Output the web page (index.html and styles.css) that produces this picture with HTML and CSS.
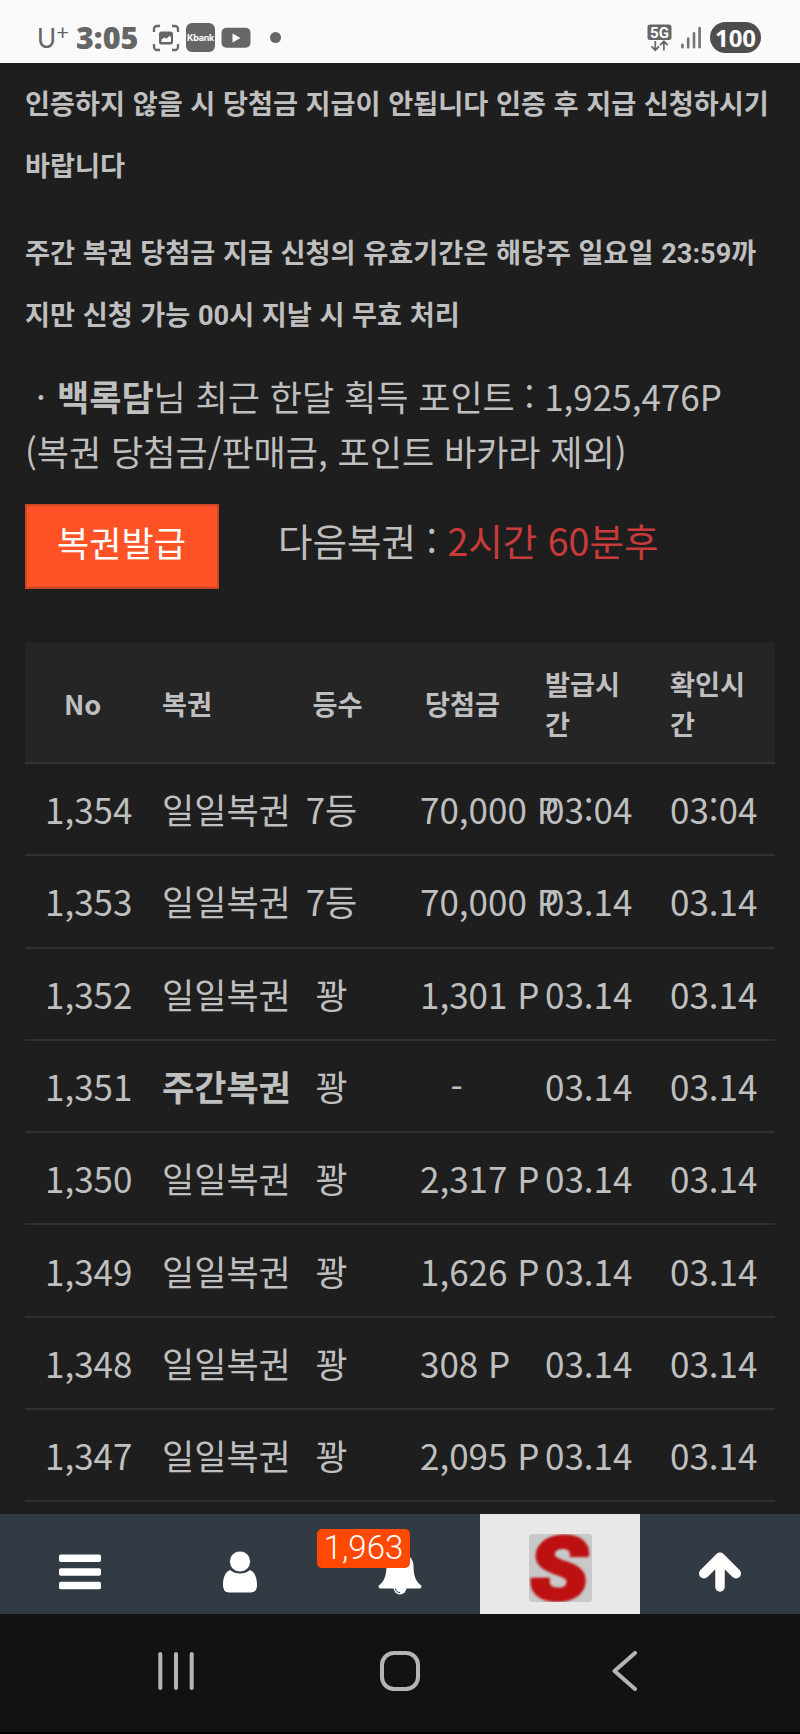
FILE: index.html
```html
<!DOCTYPE html>
<html lang="ko">
<head>
    <meta charset="UTF-8">
    <meta name="viewport" content="width=device-width, initial-scale=1.0">
    <title>복권</title>
    <link rel="stylesheet" href="styles.css">
</head>
<body>

    <!-- Status Bar -->
    <div class="status-bar">
        <div class="status-left">
            <span class="carrier">U<sup>+</sup></span>
            <span class="clock">3:05</span>
            <svg class="capture-icon" width="28" height="28" viewBox="0 0 28 28">
                <path d="M2 8V5a3 3 0 0 1 3-3h3M20 2h3a3 3 0 0 1 3 3v3M26 20v3a3 3 0 0 1-3 3h-3M8 26H5a3 3 0 0 1-3-3v-3" fill="none" stroke="#6a6a6a" stroke-width="2.3"/>
                <rect x="7" y="7.5" width="14" height="13" rx="2.5" fill="#666"/>
                <path d="M9.500 18v-2.500l3-2 2 1.200 3-3 1.500 1.500V18z" fill="#fafafa"/>
            </svg>
            <span class="kbank">Kbank</span>
            <svg class="video-icon" width="30" height="22" viewBox="0 0 30 22">
                <rect x="0.500" y="0.800" width="29" height="20" rx="5" fill="#666"/>
                <path d="M11.500 6.500v9l8-4.500z" fill="#fafafa"/>
            </svg>
            <span class="dot"></span>
        </div>
        <div class="status-right">
            <svg width="25" height="28" viewBox="0 0 25 28">
                <rect x="0.500" y="0.500" width="24" height="15.500" rx="2.500" fill="#666"/>
                <text x="12.500" y="13.500" text-anchor="middle" class="net-text">5G</text>
                <path d="M8.300 17v9M4.500 22.300l3.800 3.900 3.800-3.900M16.900 26.500v-9M13.100 21.200l3.800-3.900 3.800 3.900" fill="none" stroke="#666" stroke-width="1.700"/>
            </svg>
            <svg class="signal" width="22" height="23" viewBox="0 0 22 23">
                <path d="M2.400 21.200v-2.400M8.200 21.200v-8.500M14 21.200V7.400M19.600 21.200V2" fill="none" stroke="#777" stroke-width="2.700" stroke-linecap="round"/>
            </svg>
            <span class="battery">100</span>
        </div>
    </div>

    <!-- Content -->
    <div class="content">
        <p class="notice">인증하지 않을 시 당첨금 지급이 안됩니다 인증 후 지급 신청하시기 바랍니다</p>
        <p class="notice">주간 복권 당첨금 지급 신청의 유효기간은 해당주 일요일 <span class="num">23:59</span>까<br>지만 신청 가능 <span class="num">00</span>시 지날 시 무효 처리</p>

        <p class="point-info"><span class="bullet">·</span><b>백록담</b>님 최근 한달 획득 포인트 : 1,925,476P<br>(복권 당첨금/판매금, 포인트 바카라 제외)</p>

        <div class="issue-box">
            <button class="issue-btn">복권발급</button>
            <p class="next-time">다음복권 : <span>2시간 60분후</span></p>
        </div>

        <!-- Lottery List -->
        <table class="lotto-table">
            <thead>
                <tr><th class="no">No</th><th>복권</th><th class="rank">등수</th><th class="prize">당첨금</th><th class="time">발급시간</th><th class="time">확인시간</th></tr>
            </thead>
            <tbody>
                <tr><td class="no">1,354</td><td>일일복권</td><td class="rank">7등</td><td class="prize">70,000 P</td><td class="time">03:04</td><td class="time">03:04</td></tr>
                <tr><td class="no">1,353</td><td>일일복권</td><td class="rank">7등</td><td class="prize">70,000 P</td><td class="time">03.14</td><td class="time">03.14</td></tr>
                <tr><td class="no">1,352</td><td>일일복권</td><td class="rank">꽝</td><td class="prize">1,301 P</td><td class="time">03.14</td><td class="time">03.14</td></tr>
                <tr><td class="no">1,351</td><td><b>주간복권</b></td><td class="rank">꽝</td><td class="prize none">-</td><td class="time">03.14</td><td class="time">03.14</td></tr>
                <tr><td class="no">1,350</td><td>일일복권</td><td class="rank">꽝</td><td class="prize">2,317 P</td><td class="time">03.14</td><td class="time">03.14</td></tr>
                <tr><td class="no">1,349</td><td>일일복권</td><td class="rank">꽝</td><td class="prize">1,626 P</td><td class="time">03.14</td><td class="time">03.14</td></tr>
                <tr><td class="no">1,348</td><td>일일복권</td><td class="rank">꽝</td><td class="prize">308 P</td><td class="time">03.14</td><td class="time">03.14</td></tr>
                <tr><td class="no">1,347</td><td>일일복권</td><td class="rank">꽝</td><td class="prize">2,095 P</td><td class="time">03.14</td><td class="time">03.14</td></tr>
            </tbody>
        </table>
    </div>

    <!-- Bottom Menu -->
    <div class="bottom-menu">
        <a class="menu-item">
            <svg width="42" height="36" viewBox="0 0 42 36" fill="#fff">
                <rect y="0.500" width="42" height="7.500" rx="1.800"/>
                <rect y="14.300" width="42" height="7.500" rx="1.800"/>
                <rect y="27.700" width="42" height="7.500" rx="1.800"/>
            </svg>
        </a>
        <a class="menu-item">
            <svg width="34" height="42" viewBox="0 0 34 42" fill="#fff">
                <path d="M7 19C2 21 0 27 0 34q0 7.500 6 7.500h22q6 0 6-7.500C34 27 32 21 27 19q-4.500 3.500-10 3.500T7 19z"/>
                <circle cx="17" cy="10.500" r="10.500" stroke="#323b44" stroke-width="0.800"/>
            </svg>
        </a>
        <a class="menu-item">
            <svg width="44" height="46" viewBox="0 0 44 46">
                <path d="M22 1c1.800 0 3 1.200 2.800 3.300C32 6 35.500 11 35.500 17c0 10 2.500 15.500 7.700 19.500.8 1.500-.2 3-1.900 3H2.700c-1.700 0-2.700-1.500-1.900-3C6 32.500 8.500 27 8.500 17c0-6 3.500-11 10.700-12.700C19 2.200 20.200 1 22 1z" fill="#fff"/>
                <path d="M15.500 39a6.500 6.500 0 0 0 13 0z" fill="#fff"/>
                <path d="M17.500 39.500a4.500 4.500 0 0 0 4.500 4" fill="none" stroke="#323b44" stroke-width="1"/>
            </svg>
            <span class="badge">1,963</span>
        </a>
        <a class="menu-item active">
            <svg class="logo" width="63" height="68" viewBox="0 0 63 68">
                <rect width="63" height="68" rx="3" fill="#c9c9c9"/>
                <text transform="translate(30 65.500) skewX(-7) scale(1.06 1)" x="-3" y="0" text-anchor="middle" class="logo-text">S</text>
            </svg>
        </a>
        <a class="menu-item">
            <svg width="42" height="40" viewBox="0 0 42 40">
                <path d="M5 21.500L21 5.500l16 16" fill="none" stroke="#fff" stroke-width="10" stroke-linecap="round" stroke-linejoin="round"/>
                <path d="M21 8v27" stroke="#fff" stroke-width="9.500" stroke-linecap="round"/>
            </svg>
        </a>
    </div>

    <!-- Android Navigation -->
    <div class="system-nav">
        <svg width="36" height="40" viewBox="0 0 36 40">
            <path d="M2.300 3v34M18 3v34M33.700 3v34" stroke="#b5b5b5" stroke-width="4" stroke-linecap="round"/>
        </svg>
        <svg class="home" width="40" height="40" viewBox="0 0 40 40">
            <rect x="2" y="2" width="36" height="36" rx="12" fill="none" stroke="#b5b5b5" stroke-width="4"/>
        </svg>
        <svg width="26" height="40" viewBox="0 0 26 40">
            <path d="M23 2L2.500 20 23 38" fill="none" stroke="#b5b5b5" stroke-width="4" stroke-linecap="round" stroke-linejoin="round"/>
        </svg>
    </div>

</body>
</html>
```

FILE: styles.css
```css
/* Reset */
* {
    margin: 0;
    padding: 0;
    box-sizing: border-box;
}

body {
    width: 800px;
    height: 1734px;
    overflow: hidden;
    display: flex;
    flex-direction: column;
    font-family: "Noto Sans CJK KR", sans-serif;
    font-size: 35px;
    background: #1e1e1e;
    color: #bfbfbf;
}

svg {
    display: block;
    flex-shrink: 0;
}

/* Status Bar */
.status-bar {
    height: 63px;
    padding: 12px 39px 0 37px;
    display: flex;
    justify-content: space-between;
    background: #fafafa;
    color: #666;
}

.status-left,
.status-right {
    height: 51px;
    display: flex;
    align-items: center;
}

.carrier {
    width: 39px;
    font-family: Lato, sans-serif;
    font-size: 26px;
    font-weight: 400;
    line-height: 50px;
}

.carrier sup {
    font-size: 22px;
    line-height: 0;
    vertical-align: 8px;
}

.clock {
    width: 76px;
    font-family: "Open Sans", sans-serif;
    font-size: 30.5px;
    font-weight: 800;
    line-height: 49px;
}

.kbank {
    width: 29px;
    height: 29px;
    margin-left: 6px;
    border-radius: 6px;
    background: #666;
    color: #fff;
    font-family: Inter, sans-serif;
    font-size: 9px;
    font-weight: 700;
    line-height: 29px;
    text-align: center;
    letter-spacing: -0.3px;
}

.video-icon {
    margin-left: 6px;
}

.dot {
    width: 11px;
    height: 11px;
    margin-left: 19px;
    border-radius: 50%;
    background: #666;
}

.net-text {
    font: 700 15px Roboto, sans-serif;
    fill: #fff;
}

.signal {
    margin-left: 8px;
}

.battery {
    width: 51px;
    height: 31px;
    margin-left: 8px;
    border-radius: 16px;
    background: #4d4d4d;
    color: #fff;
    font-family: "Open Sans", sans-serif;
    font-size: 24px;
    font-weight: 700;
    line-height: 31px;
    text-align: center;
}

/* Content */
.content {
    height: 1451px;
    padding: 8px 25px 0;
}

.notice {
    margin-bottom: 24px;
    font-size: 27.2px;
    font-weight: 700;
    line-height: 62px;
    white-space: nowrap;
}

.notice:first-child {
    margin-bottom: 25px;
    white-space: normal;
}

.notice .num {
    font-family: Roboto, sans-serif;
    line-height: 0;
}

.point-info {
    line-height: 55px;
    white-space: nowrap;
}

.bullet {
    display: inline-block;
    width: 32px;
    text-align: center;
}

.issue-box {
    display: flex;
    margin-top: 26px;
}

.issue-btn {
    width: 194px;
    height: 85px;
    padding: 0 1px 10px 0;
    border: 2px solid #cb4726;
    background: #ff5226;
    color: #fff;
    font-family: inherit;
    font-size: 35px;
}

.next-time {
    margin-left: 59px;
    font-size: 37.5px;
    line-height: 71px;
}

.next-time span {
    color: #c93a3a;
}

/* Lottery List */
.lotto-table {
    width: 750px;
    margin-top: 54px;
    table-layout: fixed;
    border-spacing: 0;
}

.lotto-table th {
    height: 121px;
    padding-left: 12px;
    background: #252525;
    border-bottom: 2px solid #333;
    font-size: 27.2px;
    line-height: 40px;
    text-align: left;
}

.lotto-table td {
    height: 92.3px;
    padding-left: 12px;
    border-bottom: 2px solid #303030;
    line-height: 50px;
    white-space: nowrap;
}

.lotto-table .no,
.lotto-table .prize,
.lotto-table .time {
    padding-left: 20px;
}

.lotto-table th.no {
    padding-left: 39px;
}

.lotto-table th.time {
    padding-right: 20px;
}

.lotto-table .rank,
.lotto-table th.prize,
.lotto-table .none {
    padding-left: 0;
    text-align: center;
}

.lotto-table td.rank,
.lotto-table .none {
    padding-right: 12px;
}

/* Bottom Menu */
.bottom-menu {
    height: 100px;
    display: flex;
    background: #323b44;
}

.menu-item {
    position: relative;
    width: 160px;
    padding-top: 15px;
    display: flex;
    align-items: center;
    justify-content: center;
}

.menu-item.active {
    padding-top: 8px;
    background: #e8e8e8;
}

.badge {
    position: absolute;
    left: -3px;
    top: 15px;
    width: 93px;
    height: 39px;
    border-radius: 5px;
    background: #ff4800;
    color: #fff;
    font-family: Roboto, sans-serif;
    font-size: 33px;
    font-weight: 300;
    line-height: 38px;
    text-align: center;
}

.logo-text {
    font: 900 88px Roboto, sans-serif;
    fill: #bd1010;
    stroke: #bd1010;
    stroke-width: 3px;
    filter: blur(1px);
}

/* Android Navigation */
.system-nav {
    height: 120px;
    padding: 0 162px 4px 158px;
    display: flex;
    align-items: center;
    justify-content: space-between;
    background: #121212;
    border-bottom: 2px solid #000;
}

.home {
    margin-right: 7px;
}
```
